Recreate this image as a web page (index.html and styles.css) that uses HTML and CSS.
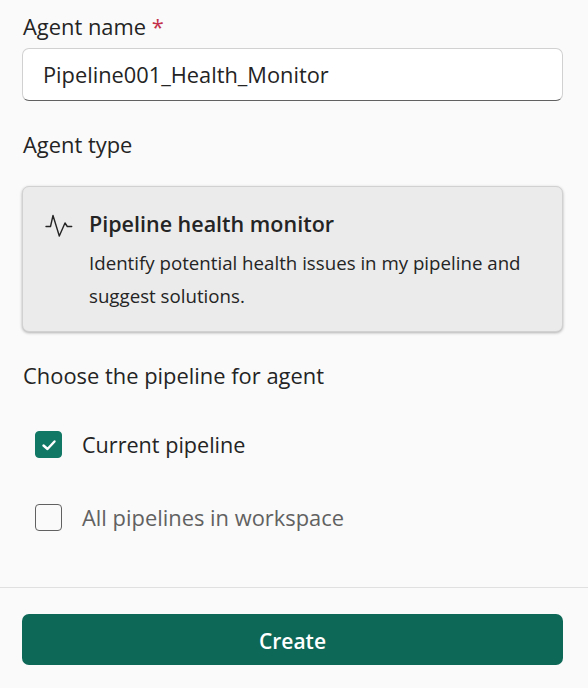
FILE: index.html
```html
<!DOCTYPE html>
<html lang="en">
<head>
    <meta charset="UTF-8">
    <meta name="viewport" content="width=device-width, initial-scale=1.0">
    <title>Create agent</title>
    <link rel="stylesheet" href="styles.css">
</head>
<body>

<div class="panel">
    <div class="form">
        <label class="field-label" for="agentName">Agent name <span class="required">*</span></label>
        <input class="text-input" type="text" id="agentName" value="Pipeline001_Health_Monitor">

        <div class="field-label type-label">Agent type</div>
        <div class="type-card">
            <svg class="pulse-icon" width="28" height="24" viewBox="0 0 28 24" fill="none" stroke="#242424" stroke-width="1.4" stroke-linejoin="round" stroke-linecap="round">
                <path d="M1 12.500H5.500L8 1.500L14.300 22L20 9L22.300 12.500H26.700"/>
            </svg>
            <div class="type-text">
                <div class="type-title">Pipeline health monitor</div>
                <div class="type-desc">Identify potential health issues in my pipeline and suggest solutions.</div>
            </div>
        </div>

        <div class="field-label choose-label">Choose the pipeline for agent</div>
        <div class="choice choice-first">
            <span class="box box-checked">
                <svg width="16" height="16" viewBox="0 0 16 16" fill="none" stroke="#fff" stroke-width="2.400" stroke-linecap="round" stroke-linejoin="round">
                    <path d="M2.500 8.500L6.500 12L13.500 4.500"/>
                </svg>
            </span>
            <span class="choice-text">Current pipeline</span>
        </div>
        <div class="choice">
            <span class="box"></span>
            <span class="choice-text choice-muted">All pipelines in workspace</span>
        </div>
    </div>

    <div class="footer">
        <button class="create-btn">Create</button>
    </div>
</div>

</body>
</html>
```

FILE: styles.css
```css
* {
    box-sizing: border-box;
}
body {
    margin: 0;
    background: #fafafa;
    font-family: "Open Sans", "Noto Sans", sans-serif;
    color: #242424;
}
.panel {
    width: 588px;
    height: 688px;
    display: flex;
    flex-direction: column;
}
.form {
    height: 587px;
    padding: 12px 25px 0 22px;
}
.field-label {
    display: block;
    padding-left: 1px;
    font-size: 21.900px;
    line-height: 30px;
}
.required {
    color: #c4314b;
}
.text-input {
    display: block;
    width: 100%;
    height: 53px;
    margin-top: 6px;
    padding: 0 20px;
    background: #fff;
    border: 1px solid #d1d1d1;
    border-bottom-color: #616161;
    border-radius: 7px;
    font-family: inherit;
    font-size: 21.800px;
    color: #242424;
}
.type-label {
    margin-top: 29px;
}
.type-card {
    display: flex;
    gap: 16px;
    height: 146px;
    margin-top: 26px;
    padding: 21px 22px;
    background: #ebebeb;
    border: 1px solid #d1d1d1;
    border-radius: 7px;
    box-shadow: 0 1px 3px rgba(0, 0, 0, 0.3);
}
.pulse-icon {
    flex-shrink: 0;
    margin-top: 6px;
}
.type-title {
    font-size: 21.500px;
    line-height: 32px;
    font-weight: 600;
}
.type-desc {
    font-size: 18.700px;
    line-height: 33px;
    margin-top: 6px;
}
.choose-label {
    margin-top: 29px;
}
.choice {
    display: flex;
    align-items: center;
    gap: 20px;
    height: 27px;
    margin-top: 46px;
    padding-left: 13px;
}
.choice-first {
    margin-top: 40px;
}
.box {
    width: 27px;
    height: 27px;
    display: flex;
    align-items: center;
    justify-content: center;
    border: 1px solid #616161;
    border-radius: 4px;
}
.box-checked {
    background: #117865;
    border-color: #117865;
}
.choice-text {
    font-size: 21.600px;
}
.choice-muted {
    font-size: 21.900px;
    color: #616161;
}
.footer {
    flex: 1;
    border-top: 1px solid #e0e0e0;
    padding: 26px 25px 0 22px;
}
.create-btn {
    display: block;
    width: 100%;
    height: 51px;
    padding-top: 4px;
    background: #0e6857;
    border: none;
    border-radius: 7px;
    color: #fff;
    font-family: inherit;
    font-size: 21px;
    font-weight: 600;
}
```
